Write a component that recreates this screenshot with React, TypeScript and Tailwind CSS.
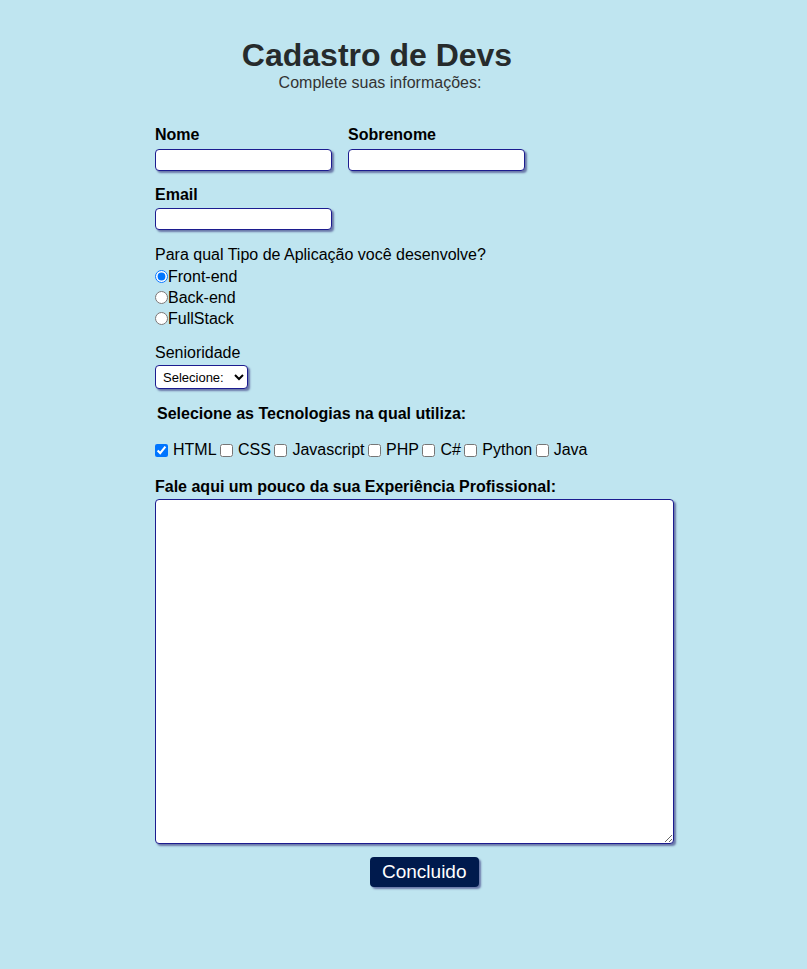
import { useState } from "react";

const techs = ["HTML", "CSS", "Javascript", "PHP", "C#", "Python", "Java"];

const field =
  "h-[22px] w-[177px] rounded-[4px] border border-[#1c1c8f] bg-white px-1 text-[13px] shadow-[2px_2px_2px_#6a78a8] outline-none";

export default function App() {
  const [tipo, setTipo] = useState("front");
  const [checked, setChecked] = useState<string[]>(["HTML"]);

  const toggle = (t: string) =>
    setChecked((c) => (c.includes(t) ? c.filter((x) => x !== t) : [...c, t]));

  return (
    <div
      className="min-h-screen bg-[#bfe5f0] text-black"
      style={{ fontFamily: '"Liberation Sans", Arial, sans-serif' }}
    >
      {/* Header */}
      <div className="ml-[155px] w-[444px] pt-[37px] text-center">
        <h1 className="text-[32px] font-bold leading-[37px] text-[#262b2c]">Cadastro de Devs</h1>
        <p className="pl-[6px] text-[16px] leading-[18px] text-[#333]">Complete suas informações:</p>
      </div>

      <form className="ml-[155px] mt-[34px] w-[520px] text-[16px] leading-[18px]">
        <div className="flex gap-[16px]">
          <div className="flex flex-col gap-[5px]">
            <label className="font-bold">Nome</label>
            <input className={field} />
          </div>
          <div className="flex flex-col gap-[5px]">
            <label className="font-bold">Sobrenome</label>
            <input className={field} />
          </div>
        </div>

        <div className="mt-[15px] flex flex-col gap-[4px]">
          <label className="font-bold">Email</label>
          <input className={field} />
        </div>

        <p className="mt-[16px]">Para qual Tipo de Aplicação você desenvolve?</p>
        <div className="mt-[2px] flex flex-col">
          {[
            ["front", "Front-end"],
            ["back", "Back-end"],
            ["full", "FullStack"],
          ].map(([v, l]) => (
            <label key={v} className="flex h-[21px] items-center">
              <input
                type="radio"
                name="tipo"
                className="m-0 h-[13px] w-[13px]"
                checked={tipo === v}
                onChange={() => setTipo(v)}
              />
              {l}
            </label>
          ))}
        </div>

        <p className="mt-[15px]">Senioridade</p>
        <select className="mt-[3px] h-[24px] w-[93px] rounded-[4px] border border-[#1c1c8f] bg-white px-[3px] text-[13px] shadow-[2px_2px_2px_#6a78a8]">
          <option>Selecione:</option>
          <option>Júnior</option>
          <option>Pleno</option>
          <option>Sênior</option>
        </select>

        <p className="ml-[2px] mt-[16px] font-bold">Selecione as Tecnologias na qual utiliza:</p>
        <div className="mt-[18px] flex items-center">
          {techs.map((t, i) => (
            <label key={t} className="flex items-center">
              <input
                type="checkbox"
                className={i === 0 ? "m-0 h-[13px] w-[13px]" : "m-0 ml-[3.5px] h-[13px] w-[13px]"}
                checked={checked.includes(t)}
                onChange={() => toggle(t)}
              />
              <span className="ml-[5px]">{t}</span>
            </label>
          ))}
        </div>

        <p className="mt-[19px] font-bold">Fale aqui um pouco da sua Experiência Profissional:</p>
        <textarea className="mt-[3px] block h-[345px] w-[519px] rounded-[4px] border border-[#1c1c8f] bg-white p-1 text-[13px] shadow-[2px_2px_2px_#6a78a8] outline-none" />

        <div className="mt-[13px] pl-[215px]">
          <button
            type="button"
            className="h-[30px] rounded-[4px] bg-[#001a4d] px-[12px] text-[19px] leading-[30px] text-white shadow-[2px_2px_2px_#6a78a8]"
          >
            Concluido
          </button>
        </div>
      </form>
    </div>
  );
}
